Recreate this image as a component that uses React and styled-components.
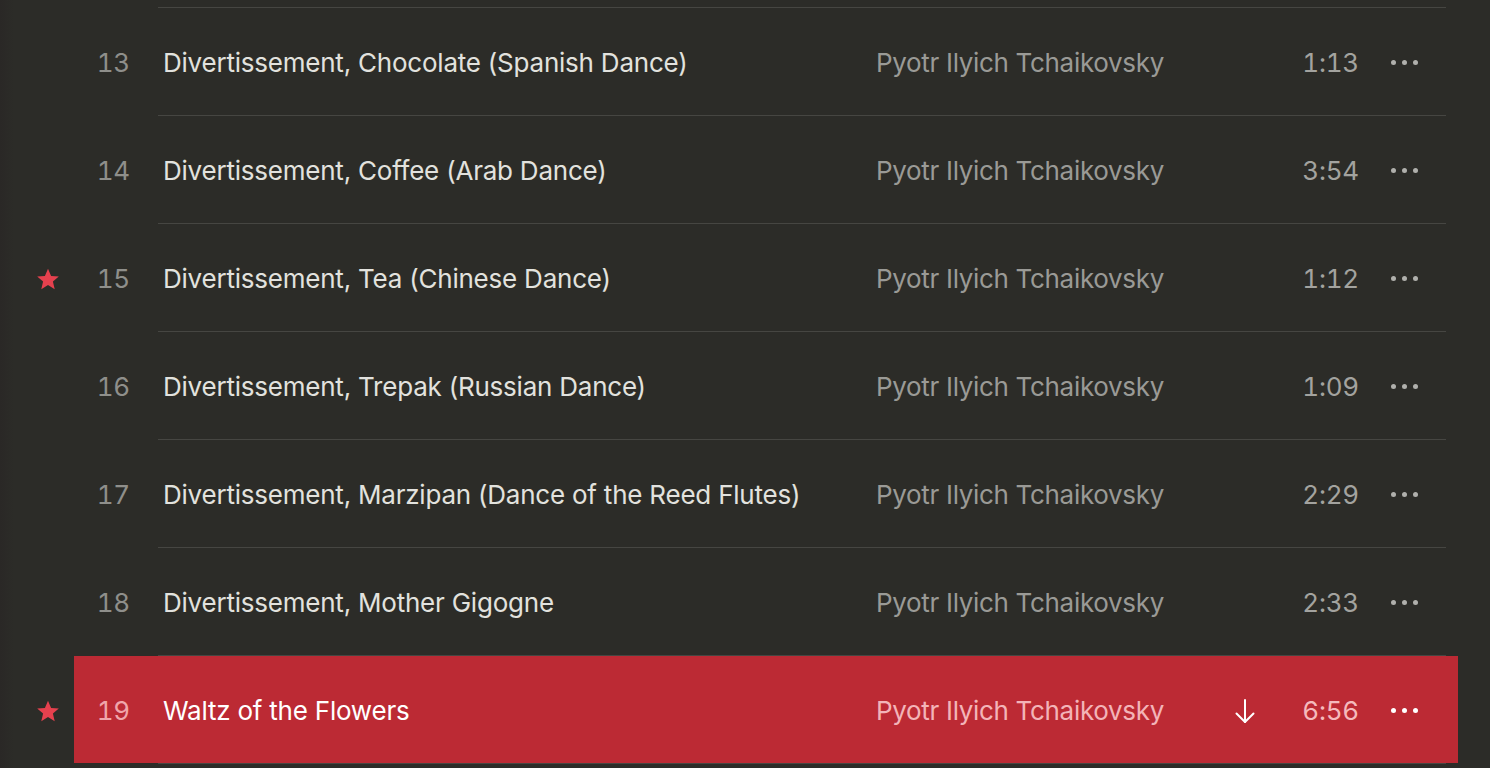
import React from "react";
import styled, { createGlobalStyle } from "styled-components";

const GlobalStyle = createGlobalStyle`
  html, body {
    margin: 0;
    padding: 0;
    background: #2c2c28;
    height: 100%;
    overflow: hidden;
  }
  body {
    font-family: Inter, "Noto Sans", "Liberation Sans", sans-serif;
    -webkit-font-smoothing: antialiased;
  }
`;

const Page = styled.div`
  width: 1490px;
  height: 768px;
  background: linear-gradient(to right, #2a2826 0px, #2c2c28 14px, #2c2c28 100%);
  padding-top: 7px;
  box-sizing: border-box;
  overflow: hidden;
`;

const List = styled.div`
  display: flex;
  flex-direction: column;
`;

const Row = styled.div`
  display: flex;
  flex-direction: column;
`;

const Divider = styled.div`
  height: 1px;
  margin: 0 44px 0 158px;
  background: #464642;
`;

const Line = styled.div`
  display: flex;
  align-items: center;
  height: 107px;
`;

const Gutter = styled.div`
  width: 74px;
  height: 100%;
  flex: none;
  display: flex;
  justify-content: center;
  align-items: center;
  padding: 2px 0 0 22px;
  box-sizing: border-box;
`;

const Track = styled.div`
  width: 1384px;
  height: 100%;
  flex: none;
  display: flex;
  align-items: center;
  padding-top: 2px;
  box-sizing: border-box;
  background: ${(p) => (p.$active ? "#bc2a34" : "transparent")};
  font-size: 26px;
  letter-spacing: -0.22px;
`;

const Num = styled.div`
  width: 84px;
  flex: none;
  text-align: right;
  padding-right: 28px;
  box-sizing: border-box;
  font-variant-numeric: tabular-nums;
  color: ${(p) => (p.$active ? "#f0a6ab" : "#8f8f8b")};
`;

const Title = styled.div`
  width: 713px;
  flex: none;
  padding-left: 5px;
  color: ${(p) => (p.$active ? "#ffffff" : "#e2e2de")};
  white-space: nowrap;
`;

const Artist = styled.div`
  width: 342px;
  flex: none;
  letter-spacing: -0.32px;
  color: ${(p) => (p.$active ? "#f3b4b8" : "#9a9a96")};
  white-space: nowrap;
`;

const Status = styled.div`
  width: 54px;
  flex: none;
  display: flex;
  justify-content: center;
  align-items: center;
`;

const Duration = styled.div`
  width: 87px;
  flex: none;
  text-align: right;
  font-variant-numeric: tabular-nums;
  color: ${(p) => (p.$active ? "#f5b9bc" : "#a3a39f")};
`;

const More = styled.div`
  width: 90px;
  flex: none;
  display: flex;
  justify-content: center;
  align-items: center;
  gap: 6px;
`;

const Dot = styled.span`
  width: 5px;
  height: 5px;
  border-radius: 50%;
  background: ${(p) => (p.$active ? "#ffffff" : "#b0b0ac")};
`;

const Star = ({ size = 24 }) => (
  <svg width={size} height={size} viewBox="0 0 24 24">
    <path
      d="M12 1.8l3.1 7.1 7.7.6-5.9 5.1 1.8 7.6L12 18.1l-6.7 4.1 1.8-7.6-5.9-5.1 7.7-.6z"
      fill="#e5414e"
    />
  </svg>
);

const DownArrow = () => (
  <svg width="24" height="28" viewBox="0 0 24 28" fill="none" stroke="#ffffff" strokeWidth="2" strokeLinecap="round" strokeLinejoin="round">
    <path d="M12 3v22" />
    <path d="M3.5 16.5L12 25l8.5-8.5" />
  </svg>
);

const tracks = [
  { n: 13, title: "Divertissement, Chocolate (Spanish Dance)", time: "1:13" },
  { n: 14, title: "Divertissement, Coffee (Arab Dance)", time: "3:54" },
  { n: 15, title: "Divertissement, Tea (Chinese Dance)", time: "1:12", star: true },
  { n: 16, title: "Divertissement, Trepak (Russian Dance)", time: "1:09" },
  { n: 17, title: "Divertissement, Marzipan (Dance of the Reed Flutes)", time: "2:29" },
  { n: 18, title: "Divertissement, Mother Gigogne", time: "2:33" },
  { n: 19, title: "Waltz of the Flowers", time: "6:56", star: true, active: true, download: true },
];

export default function App() {
  return (
    <>
      <GlobalStyle />
      <Page>
        <List>
          {tracks.map((t) => (
            <Row key={t.n}>
              <Divider />
              <Line>
                <Gutter>{t.star && <Star />}</Gutter>
                <Track $active={t.active}>
                  <Num $active={t.active}>{t.n}</Num>
                  <Title $active={t.active}>{t.title}</Title>
                  <Artist $active={t.active}>Pyotr Ilyich Tchaikovsky</Artist>
                  <Status>{t.download && <DownArrow />}</Status>
                  <Duration $active={t.active}>{t.time}</Duration>
                  <More>
                    <Dot $active={t.active} />
                    <Dot $active={t.active} />
                    <Dot $active={t.active} />
                  </More>
                </Track>
              </Line>
            </Row>
          ))}
          <Divider />
        </List>
      </Page>
    </>
  );
}
